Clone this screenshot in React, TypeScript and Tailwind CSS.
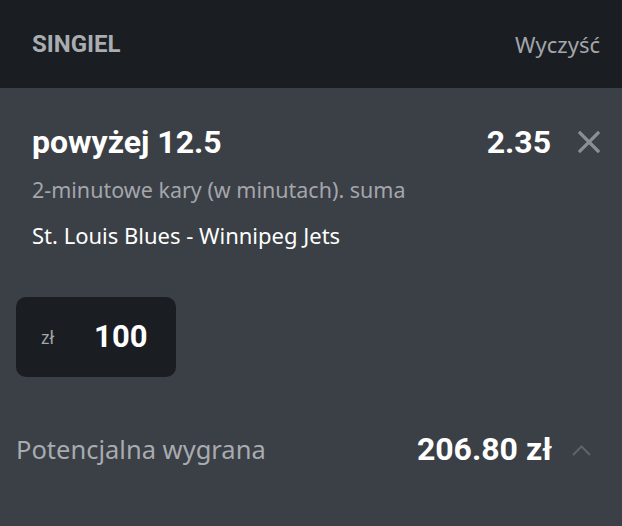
const body = { fontFamily: '"Noto Sans", "Open Sans", sans-serif' }
const bold = { fontFamily: 'Roboto, "Liberation Sans", sans-serif' }

export default function App() {
  return (
    <div className="w-[622px] h-[526px] bg-[#3b3f46] flex flex-col overflow-hidden">
      <div className="h-[88px] bg-[#1a1d21] flex items-center justify-between pl-[32px] pr-[22px]">
        <span className="text-[24px] font-bold text-[#a9acb0]" style={bold}>
          SINGIEL
        </span>
        <span className="text-[22px] text-[#a3a6ab]" style={body}>
          Wyczyść
        </span>
      </div>

      <div className="flex flex-col px-[16px]">
        <div className="flex items-center justify-between pl-[16px] pt-[34px]">
          <span className="text-[32px] font-bold text-white leading-[40px]" style={bold}>
            powyżej 12.5
          </span>
          <div className="flex items-center gap-[27px] pr-[6px]">
            <span className="text-[32px] font-bold text-white leading-[40px]" style={bold}>
              2.35
            </span>
            <svg width="22" height="22" viewBox="0 0 22 22" className="text-[#8b8e93]">
              <path d="M2 2 L20 20 M20 2 L2 20" stroke="currentColor" strokeWidth="3.2" strokeLinecap="square" />
            </svg>
          </div>
        </div>
        <div className="pl-[16px] mt-[14px] text-[21.5px] text-[#a3a6ab] leading-[28px]" style={body}>
          2-minutowe kary (w minutach). suma
        </div>
        <div className="pl-[16px] mt-[17px] text-[22px] text-white leading-[28px]" style={body}>
          St. Louis Blues - Winnipeg Jets
        </div>

        <div className="mt-[48px] w-[160px] h-[80px] rounded-[10px] bg-[#1a1d21] flex items-center">
          <span className="ml-[25px] text-[18px] text-[#a3a6ab]" style={body}>
            zł
          </span>
          <span className="ml-[40px] text-[31px] font-bold text-white" style={bold}>
            100
          </span>
        </div>

        <div className="mt-[48px] flex items-center justify-between">
          <span className="text-[25.5px] text-[#a8abb0]" style={body}>
            Potencjalna wygrana
          </span>
          <div className="flex items-center gap-[20px] pr-[15px]">
            <span className="text-[32px] font-bold text-white" style={bold}>
              206.80 zł
            </span>
            <svg width="19" height="11" viewBox="0 0 19 11" className="text-[#5f636a] mt-[2px]">
              <path d="M1 10 L9.5 1.5 L18 10" stroke="currentColor" strokeWidth="2" fill="none" />
            </svg>
          </div>
        </div>
      </div>
    </div>
  )
}
